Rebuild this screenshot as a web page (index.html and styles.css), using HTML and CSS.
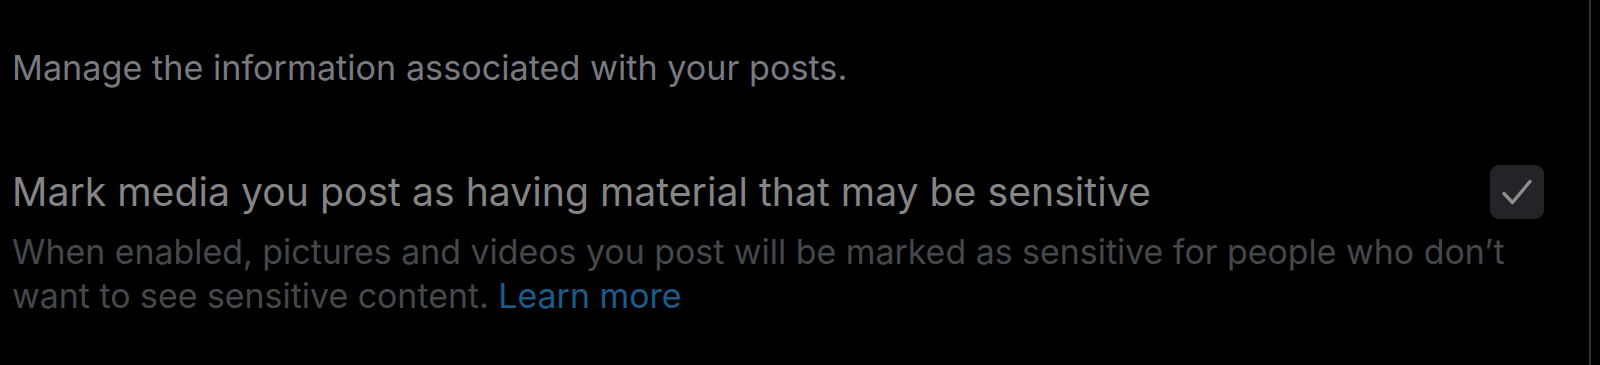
FILE: index.html
```html
<!DOCTYPE html>
<html lang="en">
<head>
<meta charset="utf-8">
<title>Settings</title>
<link rel="stylesheet" href="styles.css">
</head>
<body>
<div class="page">
  <main class="panel">
    <p class="intro">Manage the information associated with your posts.</p>
    <section class="setting">
      <div class="setting-row">
        <span class="setting-label">Mark media you post as having material that may be sensitive</span>
        <span class="checkbox" role="checkbox" aria-checked="true">
          <svg viewBox="0 0 54 54" class="check" aria-hidden="true"><path d="M14 28.5l8.5 9L40 16.5" fill="none" stroke="currentColor" stroke-width="3.4" stroke-linecap="round" stroke-linejoin="round"/></svg>
        </span>
      </div>
      <p class="setting-desc">When enabled, pictures and videos you post will be marked as sensitive for people who don’t want to see sensitive content. <a class="link" href="#">Learn more</a></p>
    </section>
  </main>
</div>
</body>
</html>
```

FILE: styles.css
```css
html, body {
  margin: 0;
  padding: 0;
  background: #000;
  height: 100%;
}
body {
  font-family: Inter, "Noto Sans", "Liberation Sans", sans-serif;
  overflow: hidden;
}
.page {
  width: 1591px;
  height: 100%;
  border-right: 2px solid #2f3236;
  box-sizing: border-box;
}
.panel {
  width: 1544px;
  padding: 46px 0 0 12px;
  box-sizing: border-box;
}
.intro {
  margin: 0;
  font-size: 34.2px;
  line-height: 44px;
  color: #777b80;
}
.setting {
  margin-top: 75px;
}
.setting-row {
  display: flex;
  align-items: center;
  justify-content: space-between;
}
.setting-label {
  font-size: 39.2px;
  line-height: 48px;
  color: #858585;
}
.checkbox {
  width: 54px;
  height: 54px;
  border-radius: 9px;
  background: #222427;
  color: #8d8d8d;
  display: flex;
  align-items: center;
  justify-content: center;
  flex: none;
}
.check {
  width: 54px;
  height: 54px;
}
.setting-desc {
  margin: 11px 0 0;
  font-size: 33.9px;
  line-height: 44px;
  color: #45484b;
}
.link {
  color: #1c5b88;
  text-decoration: none;
}
```
